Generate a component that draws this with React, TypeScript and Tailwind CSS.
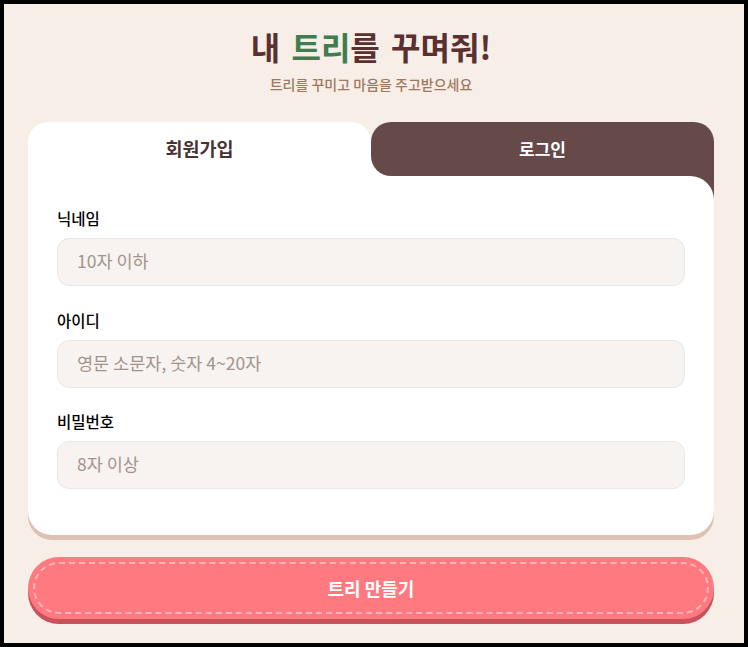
const font = "font-['Noto_Sans_CJK_KR','Noto_Sans',sans-serif]";

function Field({ label, placeholder, className }: { label: string; placeholder: string; className?: string }) {
  return (
    <div className={className}>
      <label className="block text-[15.5px] leading-[20px] font-medium text-black">{label}</label>
      <input
        placeholder={placeholder}
        className="mt-[10px] block h-[48px] w-full rounded-[12px] border border-[#ebe7e4] bg-[#f7f3f0] px-[19px] pb-[3px] text-[17.5px] text-[#8a7a70] placeholder:text-[#a3948b] outline-none"
      />
    </div>
  );
}

export default function App() {
  return (
    <div className={`${font} h-[647px] w-[748px] border-4 border-black bg-[#f7eee8] pl-[24px] pr-[30px] overflow-hidden`}>
      {/* Title */}
      <div className="flex flex-col items-center pt-[20px]">
        <h1 className="text-[32px] leading-[44px] font-bold text-[#5a3030] [word-spacing:4px]">
          내 <span className="text-[#3f7d4e]">트리</span>를 꾸며줘!
        </h1>
        <p className="mt-[6px] text-[14px] leading-[20px] font-medium text-[#a0785f]">트리를 꾸미고 마음을 주고받으세요</p>
      </div>

      {/* Tabs */}
      <div className="mt-[28px] grid grid-cols-2">
        <div className="relative flex h-[54px] items-center justify-center rounded-t-[20px] bg-white text-[18.5px] font-bold text-[#4a3232]">
          회원가입
          <div className="absolute bottom-0 left-full h-[20px] w-[20px] bg-white" />
        </div>
        <div className="relative z-10 flex h-[54px] items-center justify-center rounded-t-[20px] rounded-bl-[20px] bg-[#664a4a] text-[17px] font-bold text-white">
          로그인
        </div>
      </div>

      {/* Form card */}
      <div className="relative">
        <div className="absolute right-0 top-0 h-[24px] w-[24px] bg-[#664a4a]" />
        <div className="relative rounded-b-[24px] rounded-tr-[24px] bg-white px-[29px] pt-[32px] pb-[46px] shadow-[0_5px_0_#dcc1b4]">
          <Field label="닉네임" placeholder="10자 이하" />
          <Field label="아이디" placeholder="영문 소문자, 숫자 4~20자" className="mt-[24px]" />
          <Field label="비밀번호" placeholder="8자 이상" className="mt-[23px]" />
        </div>
      </div>

      {/* Submit */}
      <button className="relative mt-[22px] flex h-[62px] w-full items-center justify-center rounded-full bg-[#ff7a80] text-[18px] font-bold text-white shadow-[0_5px_0_#c9525a]">
        <span className="absolute inset-[5px] rounded-full border-2 border-dashed border-[#ffb6b9]" />
        트리 만들기
      </button>
    </div>
  );
}
